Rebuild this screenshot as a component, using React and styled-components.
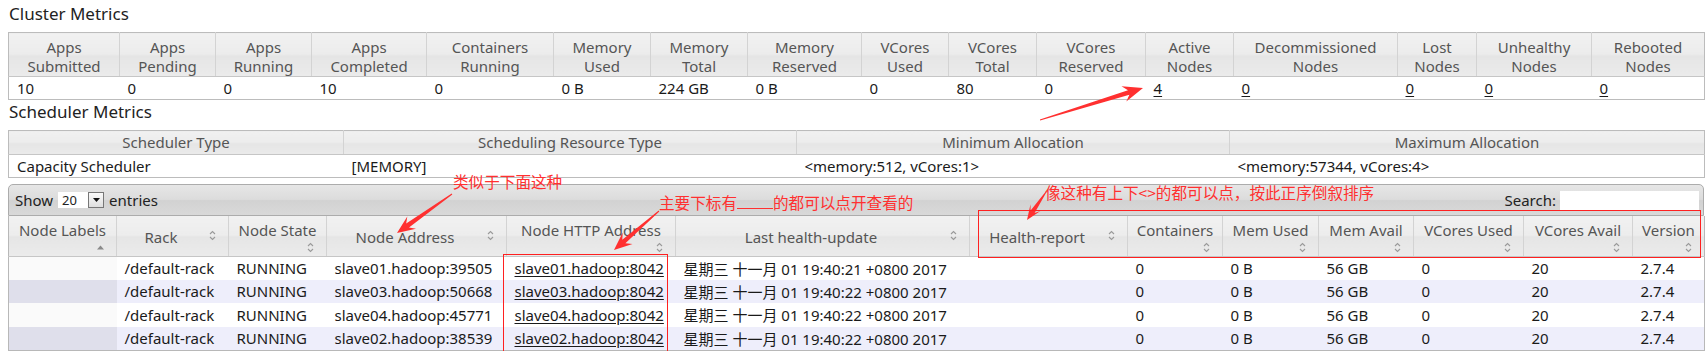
import React from 'react';
import styled, { createGlobalStyle } from 'styled-components';

const GlobalStyle = createGlobalStyle`
  html, body { margin: 0; padding: 0; background: #fff; }
  body {
    font-family: "Noto Sans", "Noto Sans CJK SC", sans-serif;
    color: #222;
  }
`;

const RED = '#ff3030';

const Page = styled.div`
  position: relative;
  box-sizing: border-box;
  width: 1708px;
  padding: 0 4px 0 8px;
`;

const Title = styled.h3`
  margin: ${p => (p.$first ? '2px' : '0')} 0 6px 1px;
  font-size: 17px;
  font-weight: normal;
  line-height: 24px;
  color: #222;
`;

const Grid = styled.table`
  width: 1696px;
  table-layout: fixed;
  border-collapse: collapse;
  border: 1px solid #bcbcbc;
  font-size: 15px;
`;

const HeadRow = styled.tr`
  height: ${p => p.$h}px;
`;

const Th = styled.th`
  padding: ${p => (p.$two ? '5px 2px 0' : '0 2px')};
  vertical-align: ${p => (p.$two ? 'top' : 'middle')};
  font-weight: normal;
  line-height: 19px;
  color: #555;
  text-align: center;
  white-space: pre-line;
  background: linear-gradient(#f1f1f1 0%, #ececec 48%, #e5e5e5 52%, #ebebeb 100%);
  border-right: 1px solid #d3d3d3;
  border-bottom: 1px solid #c6c6c6;
  &:last-child { border-right: none; }
`;

const Tr = styled.tr`
  height: ${p => p.$h || 23}px;
  background: ${p => (p.$alt ? '#eeeefb' : '#fff')};
`;

const Td = styled.td`
  padding: 0 8px;
  white-space: nowrap;
  color: #1a1a1a;
  background: ${p => (p.$sorted ? (p.$alt ? '#dfdfeb' : '#fafafa') : 'transparent')};
`;

const Link = styled.a`
  color: #1a1a1a;
  text-decoration: underline;
  text-underline-offset: 2px;
`;

const TableBlock = styled.div`
  margin-top: 6px;
  width: 1696px;
`;

const Toolbar = styled.div`
  box-sizing: border-box;
  display: flex;
  align-items: center;
  justify-content: space-between;
  height: 32px;
  padding: 0 4px 0 6px;
  border: 1px solid #acacac;
  border-radius: ${p => (p.$bottom ? '0 0 5px 5px' : '5px 5px 0 0')};
  background: linear-gradient(#e6e6e6 0%, #dcdcdc 48%, #d2d2d2 52%, #d9d9d9 100%);
  font-size: 15px;
  color: #222;
`;

const ToolGroup = styled.div`
  display: flex;
  align-items: center;
`;

const Select = styled.div`
  display: flex;
  align-items: stretch;
  height: 16px;
  margin: 0 5px;
  background: #fff;
  font-size: 13px;
  line-height: 16px;
`;

const SelectValue = styled.span`
  width: 26px;
  padding-left: 4px;
`;

const SelectButton = styled.span`
  box-sizing: border-box;
  display: flex;
  align-items: center;
  justify-content: center;
  width: 16px;
  border: 1px solid #777;
  background: linear-gradient(#fafafa, #dedede);
`;

const SearchInput = styled.div`
  width: 139px;
  height: 19px;
  margin-left: 4px;
  background: #fff;
`;

const NodeGrid = styled(Grid)`
  border-top: none;
  border-color: #b8b8b8;
`;

const SortTh = styled.th`
  padding: 0;
  vertical-align: top;
  font-weight: normal;
  color: #555;
  background: linear-gradient(#f1f1f1 0%, #ececec 48%, #e5e5e5 52%, #ebebeb 100%);
  border-right: 1px solid #d3d3d3;
  border-bottom: 1px solid #c6c6c6;
  &:last-child { border-right: none; }
`;

const HeadInner = styled.div`
  box-sizing: border-box;
  display: flex;
  height: 39px;
  flex-direction: ${p => (p.$stack ? 'column' : 'row')};
  align-items: ${p => (p.$stack ? 'stretch' : 'center')};
  padding: ${p => (p.$stack ? '4px 6px 0' : '3px 12px 0')};
`;

const HeadLabel = styled.span`
  flex: ${p => (p.$stack ? 'none' : '1')};
  margin-right: ${p => (p.$stack ? '0' : '16px')};
  line-height: 20px;
  text-align: center;
  white-space: nowrap;
`;

const IconSlot = styled.span`
  display: flex;
  align-items: center;
  justify-content: flex-end;
  height: ${p => (p.$stack ? '14px' : 'auto')};
  margin-right: ${p => (p.$stack ? '6px' : '0')};
  margin-top: ${p => (p.$stack ? '0' : '-4px')};
`;

const Note = styled.span`
  position: absolute;
  left: ${p => p.$x}px;
  top: ${p => p.$y}px;
  font-family: "Noto Sans CJK SC", sans-serif;
  font-size: 15.6px;
  line-height: 20px;
  color: ${RED};
  white-space: nowrap;
  pointer-events: none;
`;

const Blank = styled.span`
  display: inline-block;
  width: 36px;
  border-bottom: 1px solid ${RED};
  height: 14px;
  vertical-align: baseline;
`;

const Overlay = styled.svg`
  position: absolute;
  left: 0;
  top: 0;
  pointer-events: none;
`;

const SortIcon = () => (
  <svg width="7" height="11" viewBox="0 0 7 11">
    <path d="M1 4 L3.5 1.5 L6 4 M1 7 L3.5 9.5 L6 7" fill="none" stroke="#9a9a9a" strokeWidth="1.1" />
  </svg>
);

const AscIcon = () => (
  <svg width="7" height="5" viewBox="0 0 7 5">
    <path d="M0 4.5 L3.5 0.5 L7 4.5 Z" fill="#8a8a8a" />
  </svg>
);

const arrowPoints = (x1, y1, x2, y2, head = 18, wing = 7.5) => {
  const dx = x2 - x1;
  const dy = y2 - y1;
  const len = Math.hypot(dx, dy);
  const ux = dx / len;
  const uy = dy / len;
  const nx = -uy;
  const ny = ux;
  const bx = x2 - ux * head;
  const by = y2 - uy * head;
  const kx = x2 - ux * (head - 5);
  const ky = y2 - uy * (head - 5);
  const pts = [
    [x1 + nx * 0.5, y1 + ny * 0.5],
    [kx + nx * 2.4, ky + ny * 2.4],
    [bx + nx * wing, by + ny * wing],
    [x2, y2],
    [bx - nx * wing, by - ny * wing],
    [kx - nx * 2.4, ky - ny * 2.4],
    [x1 - nx * 0.5, y1 - ny * 0.5],
  ];
  return pts.map(p => p.map(v => v.toFixed(1)).join(',')).join(' ');
};

const clusterCols = [
  ['Apps\nSubmitted', 111, '10'],
  ['Apps\nPending', 96, '0'],
  ['Apps\nRunning', 96, '0'],
  ['Apps\nCompleted', 115, '10'],
  ['Containers\nRunning', 127, '0'],
  ['Memory\nUsed', 97, '0 B'],
  ['Memory\nTotal', 97, '224 GB'],
  ['Memory\nReserved', 114, '0 B'],
  ['VCores\nUsed', 87, '0'],
  ['VCores\nTotal', 88, '80'],
  ['VCores\nReserved', 109, '0'],
  ['Active\nNodes', 88, '4', true],
  ['Decommissioned\nNodes', 164, '0', true],
  ['Lost\nNodes', 79, '0', true],
  ['Unhealthy\nNodes', 115, '0', true],
  ['Rebooted\nNodes', 113, '0', true],
];

const schedCols = [
  ['Scheduler Type', 335, 'Capacity Scheduler'],
  ['Scheduling Resource Type', 453, '[MEMORY]'],
  ['Minimum Allocation', 433, '<memory:512, vCores:1>'],
  ['Maximum Allocation', 475, '<memory:57344, vCores:4>'],
];

const nodeCols = [
  { label: 'Node Labels', w: 108, stack: true, asc: true },
  { label: 'Rack', w: 112 },
  { label: 'Node State', w: 98, stack: true },
  { label: 'Node Address', w: 180 },
  { label: 'Node HTTP Address', w: 169, stack: true },
  { label: 'Last health-update', w: 294 },
  { label: 'Health-report', w: 158 },
  { label: 'Containers', w: 95, stack: true },
  { label: 'Mem Used', w: 96, stack: true },
  { label: 'Mem Avail', w: 95, stack: true },
  { label: 'VCores Used', w: 110, stack: true },
  { label: 'VCores Avail', w: 109, stack: true },
  { label: 'Version', w: 72, stack: true },
];

const nodes = [
  ['slave01.hadoop:39505', 'slave01.hadoop:8042', '星期三 十一月 01 19:40:21 +0800 2017'],
  ['slave03.hadoop:50668', 'slave03.hadoop:8042', '星期三 十一月 01 19:40:22 +0800 2017'],
  ['slave04.hadoop:45771', 'slave04.hadoop:8042', '星期三 十一月 01 19:40:22 +0800 2017'],
  ['slave02.hadoop:38539', 'slave02.hadoop:8042', '星期三 十一月 01 19:40:22 +0800 2017'],
];

export default function App() {
  return (
    <Page>
      <GlobalStyle />
      <Title $first>Cluster Metrics</Title>
      <Grid>
        <colgroup>
          {clusterCols.map(c => <col key={c[0]} style={{ width: c[1] }} />)}
        </colgroup>
        <thead>
          <HeadRow $h={43}>
            {clusterCols.map(c => <Th key={c[0]} $two>{c[0]}</Th>)}
          </HeadRow>
        </thead>
        <tbody>
          <Tr>
            {clusterCols.map(c => (
              <Td key={c[0]}>{c[3] ? <Link>{c[2]}</Link> : c[2]}</Td>
            ))}
          </Tr>
        </tbody>
      </Grid>

      <Title>Scheduler Metrics</Title>
      <Grid>
        <colgroup>
          {schedCols.map(c => <col key={c[0]} style={{ width: c[1] }} />)}
        </colgroup>
        <thead>
          <HeadRow $h={24}>
            {schedCols.map(c => <Th key={c[0]}>{c[0]}</Th>)}
          </HeadRow>
        </thead>
        <tbody>
          <Tr>
            {schedCols.map(c => <Td key={c[0]}>{c[2]}</Td>)}
          </Tr>
        </tbody>
      </Grid>

      <TableBlock>
        <Toolbar>
          <ToolGroup>
            Show
            <Select>
              <SelectValue>20</SelectValue>
              <SelectButton>
                <svg width="7" height="4" viewBox="0 0 7 4"><path d="M0 0 L7 0 L3.5 4 Z" fill="#111" /></svg>
              </SelectButton>
            </Select>
            entries
          </ToolGroup>
          <ToolGroup>
            Search:
            <SearchInput />
          </ToolGroup>
        </Toolbar>
        <NodeGrid>
          <colgroup>
            {nodeCols.map(c => <col key={c.label} style={{ width: c.w }} />)}
          </colgroup>
          <thead>
            <HeadRow $h={40}>
              {nodeCols.map(c => (
                <SortTh key={c.label}>
                  <HeadInner $stack={c.stack}>
                    <HeadLabel $stack={c.stack}>{c.label}</HeadLabel>
                    <IconSlot $stack={c.stack}>{c.asc ? <AscIcon /> : <SortIcon />}</IconSlot>
                  </HeadInner>
                </SortTh>
              ))}
            </HeadRow>
          </thead>
          <tbody>
            {nodes.map((n, i) => {
              const alt = i % 2 === 1;
              return (
                <Tr key={n[0]} $alt={alt} $h={23.5}>
                  <Td $sorted $alt={alt} />
                  <Td>/default-rack</Td>
                  <Td>RUNNING</Td>
                  <Td>{n[0]}</Td>
                  <Td><Link>{n[1]}</Link></Td>
                  <Td>{n[2]}</Td>
                  <Td />
                  <Td>0</Td>
                  <Td>0 B</Td>
                  <Td>56 GB</Td>
                  <Td>0</Td>
                  <Td>20</Td>
                  <Td>2.7.4</Td>
                </Tr>
              );
            })}
          </tbody>
        </NodeGrid>
        <Toolbar $bottom />
      </TableBlock>

      <Overlay width="1708" height="351" viewBox="0 0 1708 351">
        <polygon points={arrowPoints(1040, 118, 1143, 86, 20, 8)} fill={RED} />
        <polygon points={arrowPoints(452, 192, 397, 231)} fill={RED} />
        <polygon points={arrowPoints(659, 209, 614, 248)} fill={RED} />
        <polygon points={arrowPoints(1046, 190, 1027, 218, 15, 6)} fill={RED} />
        <rect x="503.5" y="252.5" width="164" height="97" fill="none" stroke="#ff2020" strokeWidth="1" />
        <rect x="978.5" y="208.5" width="722" height="47" fill="none" stroke="#ff2020" strokeWidth="1" />
      </Overlay>
      <Note $x={453} $y={169}>类似于下面这种</Note>
      <Note $x={659} $y={190}>主要下标有<Blank />的都可以点开查看的</Note>
      <Note $x={1045} $y={180}>像这种有上下&lt;&gt;的都可以点，按此正序倒叙排序</Note>
    </Page>
  );
}
